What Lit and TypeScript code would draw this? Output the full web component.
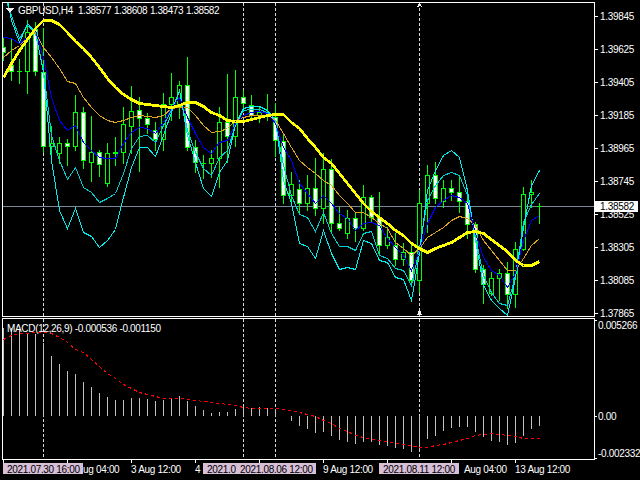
import { LitElement, html, css, svg } from "lit";
import { customElement } from "lit/decorators.js";

// all chart data is in page pixels, one bar every 8px starting at x = 3
const barX = (i: number) => 3 + 8 * i;

// high, body top, body bottom, low, 1 = bearish (white body)
const CANDLES: number[][] = [
  [38, 47, 52, 60, 1], [38, 65, 71, 80, 1], [59, 71, 71, 83, 0], [20, 32, 71, 93, 0],
  [22, 29, 71, 75, 1], [28, 72, 146, 152, 1], [126, 143, 146, 163, 0], [137, 143, 153, 163, 0],
  [139, 143, 146, 165, 1], [95, 112, 146, 150, 0], [107, 112, 160, 168, 1], [116, 152, 162, 181, 0],
  [150, 152, 164, 176, 1], [143, 153, 183, 186, 0], [137, 152, 153, 165, 0], [107, 124, 152, 163, 0],
  [86, 111, 126, 153, 0], [97, 110, 118, 171, 1], [113, 118, 124, 133, 1], [122, 130, 139, 150, 1],
  [93, 104, 139, 150, 0], [73, 97, 104, 120, 0], [81, 85, 107, 118, 0], [57, 85, 147, 150, 1],
  [140, 147, 162, 172, 1], [155, 163, 163, 178, 0], [150, 158, 163, 177, 0], [107, 122, 158, 187, 0],
  [74, 122, 136, 162, 1], [70, 97, 136, 146, 0], [90, 97, 103, 110, 1], [95, 105, 115, 118, 1],
  [107, 112, 115, 122, 0], [94, 115, 115, 120, 0], [103, 117, 140, 156, 1], [135, 141, 195, 203, 1],
  [172, 184, 195, 203, 0], [180, 189, 203, 212, 1], [175, 188, 203, 210, 0], [158, 188, 208, 215, 1],
  [153, 169, 208, 223, 0], [159, 169, 223, 232, 1], [207, 223, 228, 230, 1], [210, 218, 233, 238, 0],
  [212, 218, 228, 241, 1], [185, 197, 228, 230, 0], [195, 197, 217, 222, 1], [192, 217, 245, 253, 1],
  [227, 237, 245, 248, 0], [233, 245, 259, 265, 1], [243, 252, 259, 265, 0], [243, 252, 280, 285, 1],
  [190, 203, 280, 292, 0], [165, 175, 203, 232, 0], [162, 175, 198, 203, 1], [180, 188, 201, 207, 0],
  [180, 188, 192, 200, 1], [177, 192, 201, 212, 1], [193, 201, 224, 238, 1], [222, 224, 269, 272, 1],
  [265, 269, 284, 303, 1], [272, 278, 293, 295, 0], [269, 273, 278, 300, 0], [262, 273, 294, 308, 1],
  [242, 249, 294, 307, 0], [187, 194, 249, 250, 0], [180, 192, 194, 207, 0], [203, 206, 206, 223, 0],
];

const YELLOW = [77, 63, 50, 39, 28, 20, 20, 24, 32, 41, 48, 57, 67, 78, 87, 94, 99, 103, 104, 105, 106, 107, 105, 102, 102, 106, 112,
  115, 120, 121, 121, 119, 117, 115, 114, 114, 122, 128, 138, 147, 157, 163, 173, 183, 193, 203, 211, 217, 223, 230, 235, 243, 248, 252,
  248, 245, 242, 237, 232, 231, 233, 239, 245, 251, 260, 265, 265, 261];
const ORANGE = [57, 50, 45, 37, 32, 47, 57, 68, 81, 83, 97, 107, 115, 120, 122, 120, 117, 115, 116, 117, 115, 108, 107, 107, 115, 125, 132,
  131, 128, 120, 117, 115, 115, 115, 120, 133, 147, 160, 167, 173, 180, 185, 195, 203, 212, 212, 217, 223, 228, 242, 248, 255, 248, 237,
  232, 227, 220, 216, 218, 225, 240, 250, 260, 270, 270, 258, 245, 238];
const BLUE = [37, 38, 43, 37, 30, 57, 97, 120, 130, 125, 142, 150, 157, 158, 158, 143, 132, 127, 128, 133, 122, 108, 97, 117, 133, 147, 153,
  142, 140, 123, 115, 112, 111, 113, 123, 147, 160, 183, 193, 203, 195, 203, 213, 218, 230, 223, 222, 225, 238, 247, 255, 270, 250, 223,
  207, 200, 195, 197, 203, 233, 257, 270, 275, 287, 273, 240, 220, 215];
const CYAN_INNER = [-8, 15, 38, 25, 33, 70, 135, 160, 179, 167, 187, 192, 202, 198, 193, 173, 148, 136, 135, 142, 125, 110, 90, 130, 152, 168, 175,
  157, 150, 125, 110, 109, 109, 112, 122, 165, 195, 214, 217, 231, 212, 233, 246, 246, 250, 233, 231, 255, 258, 268, 270, 285, 248, 200,
  185, 175, 172, 175, 195, 237, 275, 292, 303, 305, 275, 222, 204, 193];
const CYAN_OUTER = [-20, 20, 42, 23, 32, 72, 160, 210, 228, 208, 232, 236, 247, 240, 229, 197, 167, 147, 147, 156, 135, 112, 90, 135, 162, 188, 196,
  172, 160, 124, 108, 106, 106, 110, 120, 180, 203, 243, 246, 258, 230, 253, 269, 267, 269, 240, 243, 260, 262, 277, 279, 300, 253, 190,
  170, 155, 150, 157, 190, 240, 285, 300, 308, 315, 277, 227, 185, 170];

// macd histogram, top of the positive bars then bottom of the negative ones
const HIST = [328, 328, 329, 333, 334, 343, 356, 364, 371, 374, 382, 387, 393, 397, 400, 400, 398, 398, 399, 401, 400, 399, 396, 401, 406, 410, 413,
  412, 412, 409, 406, 408, 407, 408, 409, 416, 421, 426, 429, 433, 432, 436, 440, 442, 444, 442, 442, 445, 446, 448, 449, 452, 449, 439,
  436, 431, 428, 427, 427, 432, 437, 441, 442, 445, 443, 436, 429, 426];
const SIGNAL = [339, 335, 333, 333, 332, 332, 333, 337, 342, 349, 352, 359, 366, 373, 378, 384, 388, 392, 394, 396, 398, 398, 398, 399, 400, 401, 402,
  403, 404, 405, 407, 408, 408, 408, 408, 409, 410, 412, 414, 416, 420, 423, 428, 431, 435, 437, 439, 440, 441, 443, 444, 445, 447, 447,
  445, 444, 442, 440, 438, 435, 434, 433, 434, 435, 436, 438, 438, 438];

const PRICES = ["1.39845", "1.39625", "1.39405", "1.39185", "1.38965", "1.38745", "1.38525", "1.38305", "1.38085", "1.37865"];
const VLINES = [43, 243, 275, 419];
const TIME_TICKS = [3, 67, 131, 195, 259, 323, 387, 451, 515];
// what is left of the time labels once the crosshair boxes lie over them
const TIME_LABELS = [
  [83, "ug 04:00"], [131, "3 Aug 12:00"], [195, "4"], [323, "9 Aug 12:00"], [464, "Aug 04:00"], [515, "13 Aug 12:00"],
] as [number, string][];
const TIME_BOXES = [
  [3, "2021.07.30 16:00"], [203, "2021.0"], [236, "2021.08.06 12:00"], [379, "2021.08.11 12:00"],
] as [number, string][];

const points = (ys: number[]) => ys.map((y, i) => `${barX(i) + 0.5},${y + 0.5}`).join(" ");

@customElement("app-root")
export class AppRoot extends LitElement {
  static styles = css`
    :host {
      display: block;
      width: 640px;
      height: 480px;
      background: #000;
      overflow: hidden;
    }

    .terminal {
      display: grid;
      grid-template-columns: 593px 45px;
      grid-template-rows: 315px 143px 20px;
      padding: 2px 0 0 2px;
    }

    .pane {
      box-sizing: border-box;
      border: 1px solid #fff;
    }

    .pane-macd,
    .axis-macd {
      margin-top: 1px;
    }

    .time {
      grid-column: 1 / 3;
    }

    svg {
      display: block;
    }

    .axis-price {
      overflow: visible;
    }

    .crisp {
      shape-rendering: crispEdges;
    }

    .label {
      font-family: "Liberation Sans", Arial, sans-serif;
      font-size: 10px;
      letter-spacing: -0.32px;
      fill: #fff;
      white-space: pre;
    }

    .label-tight {
      letter-spacing: -0.44px;
    }

    .label-dark {
      fill: #000;
    }

    .vline {
      stroke: #d8d8d8;
      stroke-dasharray: 3 2;
    }

    .hline {
      stroke: #778899;
    }

    .ma {
      fill: none;
    }

    .ma-yellow {
      stroke: #ffff00;
      stroke-width: 2.8;
    }

    .ma-orange {
      stroke: #daa520;
    }

    .ma-blue {
      stroke: #0000ff;
    }

    .ma-inner {
      stroke: #00ced1;
    }

    .ma-outer {
      stroke: #00f0f0;
    }

    .signal {
      fill: none;
      stroke: #ff0000;
      stroke-dasharray: 3 3;
    }

    .hist {
      fill: #c0c0c0;
    }

    .wick,
    .body {
      fill: #00ff00;
    }

    .inner-up {
      fill: #000;
    }

    .inner-down {
      fill: #fff;
    }

    .tick {
      stroke: #fff;
    }

    .marker {
      fill: #f4eaf4;
    }

    .price-box {
      fill: #fff;
    }

    .time-box {
      fill: #d8bfd8;
    }
  `;

  renderVLines(y1: number, y2: number) {
    return VLINES.map(
      (x) => svg`<line class="vline" x1=${x + 0.5} x2=${x + 0.5} y1=${y1} y2=${y2}></line>`
    );
  }

  renderCandle(c: number[], i: number) {
    const x = barX(i);
    const [high, top, bottom, low, down] = c;
    const h = bottom - top + 1;
    return svg`
      <rect class="wick" x=${x} y=${high} width="1" height=${low - high + 1}></rect>
      <rect class="body" x=${x - 2} y=${top} width="5" height=${h}></rect>
      ${h > 2
        ? svg`<rect class=${down ? "inner-down" : "inner-up"} x=${x - 1} y=${top + 1} width="3" height=${h - 2}></rect>`
        : ""}
    `;
  }

  renderMain() {
    return html`
      <svg class="crisp" width="591" height="313" viewBox="3 3 591 313">
        ${this.renderVLines(3, 316)}
        <line class="hline" x1="3" x2="594" y1="206.5" y2="206.5"></line>
        ${CANDLES.map((c, i) => this.renderCandle(c, i))}
        <polyline class="ma ma-inner" points=${points(CYAN_INNER)}></polyline>
        <polyline class="ma ma-outer" points=${points(CYAN_OUTER)}></polyline>
        <polyline class="ma ma-orange" points=${points(ORANGE)}></polyline>
        <polyline class="ma ma-blue" points=${points(BLUE)}></polyline>
        <polyline class="ma ma-yellow" points=${points(YELLOW)}></polyline>
        <path class="marker" d="M419 3 h1 l2 4 h-1 l-1 -1 h-1 l-1 1 h-1 Z"></path>
        <path class="marker" d="M419 310 h1 l2 5 h-5 Z"></path>
        <polygon class="marker" points="6,8 14,8 10,13"></polygon>
        <text class="label" x="18" y="14">GBPUSD,H4</text>
        <text class="label label-tight" x="78" y="14">1.38577</text>
        <text class="label label-tight" x="114" y="14">1.38608</text>
        <text class="label label-tight" x="150" y="14">1.38473</text>
        <text class="label label-tight" x="186" y="14">1.38582</text>
      </svg>
    `;
  }

  renderPriceAxis() {
    return html`
      <svg class="axis-price" width="45" height="315" viewBox="595 2 45 315">
        ${PRICES.map(
          (p, i) => svg`
            <line class="tick crisp" x1="595" x2="598" y1=${16.5 + 33 * i} y2=${16.5 + 33 * i}></line>
            <text class="label" x="600" y=${20 + 33 * i}>${p}</text>
          `
        )}
        <rect class="price-box crisp" x="595" y="201" width="43" height="11"></rect>
        <text class="label label-dark" x="600" y="210">1.38582</text>
      </svg>
    `;
  }

  renderMacd() {
    return html`
      <svg class="crisp" width="591" height="140" viewBox="3 319 591 140">
        ${this.renderVLines(319, 459)}
        ${HIST.map(
          (y, i) => svg`<rect class="hist" x=${barX(i)} y=${Math.min(y, 416)} width="1" height=${Math.abs(y - 416)}></rect>`
        )}
        <polyline class="signal" points=${points(SIGNAL)}></polyline>
        <text class="label" x="7" y="332">MACD(12,26,9) -0.000536 -0.001150</text>
      </svg>
    `;
  }

  renderMacdAxis() {
    return html`
      <svg width="45" height="142" viewBox="595 318 45 142">
        <line class="tick crisp" x1="595" x2="597" y1="320.5" y2="320.5"></line>
        <line class="tick crisp" x1="595" x2="597" y1="416.5" y2="416.5"></line>
        <line class="tick crisp" x1="595" x2="597" y1="458.5" y2="458.5"></line>
        <text class="label" x="598" y="329">0.005266</text>
        <text class="label" x="598" y="420">0.00</text>
        <text class="label" x="598" y="457">-0.002332</text>
      </svg>
    `;
  }

  renderTimeAxis() {
    return html`
      <svg class="time" width="638" height="20" viewBox="2 460 638 20">
        ${TIME_TICKS.map(
          (x) => svg`<line class="tick crisp" x1=${x + 0.5} x2=${x + 0.5} y1="460" y2="463"></line>`
        )}
        ${TIME_LABELS.map(([x, t]) => svg`<text class="label" x=${x} y="473">${t}</text>`)}
        ${TIME_BOXES.map(
          ([x, t], i) => svg`
            <rect class="time-box crisp" x=${x} y="463" width=${i === 1 ? 33 : 80} height="11"></rect>
            <text class="label label-dark" x=${x + 4} y="473">${t}</text>
          `
        )}
      </svg>
    `;
  }

  render() {
    return html`
      <div class="terminal">
        <div class="pane">${this.renderMain()}</div>
        ${this.renderPriceAxis()}
        <div class="pane pane-macd">${this.renderMacd()}</div>
        <div class="axis-macd">${this.renderMacdAxis()}</div>
        ${this.renderTimeAxis()}
      </div>
    `;
  }
}
